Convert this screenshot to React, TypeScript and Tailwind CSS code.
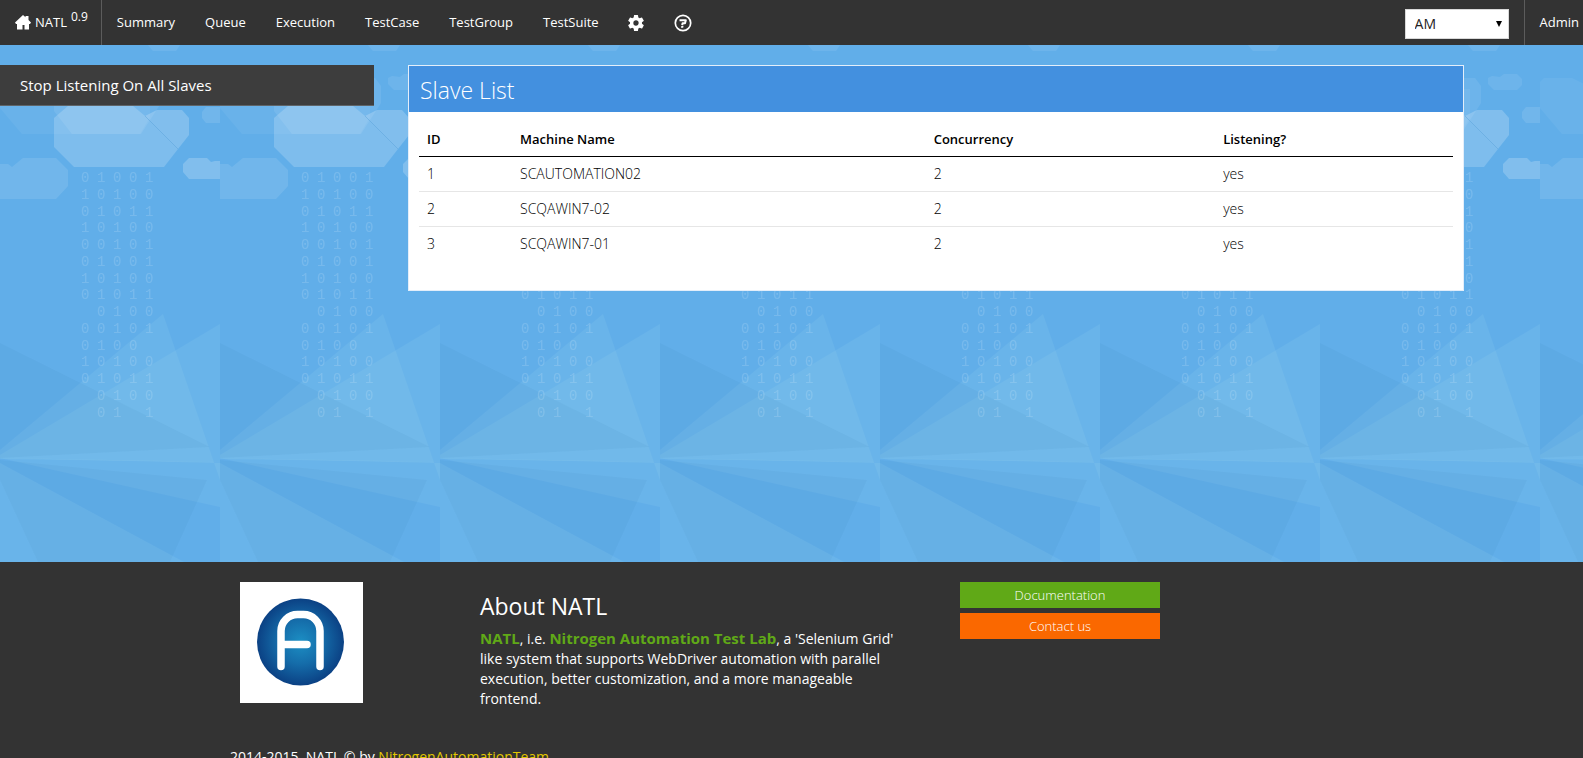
import React from "react";

const bits = [
  "01001", "10100", "01011", "10100", "00101", "01001", "10100", "01011",
  " 0100", "00101", "0100 ", "10100", "01011", " 0100", " 01 1",
];

const bitColumns = [81, 97, 113, 129, 145];

const clouds: { points: string; opacity: number }[] = [
  { points: "148,0 180,0 176,6 153,6", opacity: 0.08 },
  { points: "0,37 4,33 32,33 54,44 150,44 150,72 140,89 22,89 0,63", opacity: 0.05 },
  { points: "54,42 64,33 155,33 161,41 161,58 141,89 72,89 54,66", opacity: 0.08 },
  { points: "168,33 172,31 180,32 184,29 197,29 202,34 202,40 197,45 174,45 168,39", opacity: 0.08 },
  { points: "54,73 68,61 133,61 145,71 178,104 164,122 74,122 54,102", opacity: 0.18 },
  { points: "145,71 157,65 182,65 189,73 189,90 178,104", opacity: 0.2 },
  { points: "202,67 206,62 220,62 220,78 206,78 202,73", opacity: 0.1 },
  { points: "183,119 189,113 207,113 211,117 215,116 220,116 220,134 189,134 183,127", opacity: 0.2 },
  { points: "0,119 8,119 12,122 23,113 56,113 68,125 68,141 56,154 0,154", opacity: 0.1 },
];

const facets: { points: string; fill: string; opacity: number }[] = [
  { points: "163,269 0,405 0,413 220,418 220,435", fill: "#dcfff2", opacity: 0.07 },
  { points: "220,279 0,410 0,414 220,417", fill: "#dcfff2", opacity: 0.07 },
  { points: "0,298 210,402 0,413", fill: "#1f5f9e", opacity: 0.06 },
  { points: "0,413 220,417 220,462", fill: "#dcfff2", opacity: 0.07 },
  { points: "0,415 207,435 170,517 38,517 0,435", fill: "#1f5f9e", opacity: 0.06 },
  { points: "0,418 184,517 0,517", fill: "#dcfff2", opacity: 0.07 },
];

function Backdrop() {
  return (
    <svg className="absolute inset-0 h-full w-full" aria-hidden="true">
      <defs>
        <pattern id="scene" width="220" height="517" patternUnits="userSpaceOnUse">
          {clouds.map((c) => (
            <polygon key={c.points} points={c.points} fill="#fff" fillOpacity={c.opacity} />
          ))}
          <path d="M145 71 178 104" stroke="#5ba3dc" strokeOpacity="0.5" />
          {facets.map((f) => (
            <polygon key={f.points} points={f.points} fill={f.fill} fillOpacity={f.opacity} />
          ))}
          <g fill="#fff" fillOpacity="0.14" fontFamily="Liberation Mono, monospace" fontSize="14">
            {bits.map((row, r) =>
              row.split("").map((bit, c) =>
                bit === " " ? null : (
                  <text key={`${r}-${c}`} x={bitColumns[c]} y={Math.round(137 + r * 16.76)}>
                    {bit}
                  </text>
                ),
              ),
            )}
          </g>
        </pattern>
      </defs>
      <rect width="100%" height="100%" fill="url(#scene)" />
    </svg>
  );
}

function HomeIcon() {
  return (
    <svg viewBox="0 0 16 15" className="h-[15px] w-4" fill="currentColor" aria-hidden="true">
      <path d="M8 0 10.500 2.200V1h3v4L16 7.600 15 9h-1v5.500H9.500V10h-2v4.500H2V9H1L0 7.600Z" />
    </svg>
  );
}

function GearIcon() {
  return (
    <svg viewBox="0 0 24 24" className="size-5" fill="currentColor" aria-hidden="true">
      <path d="M19.140 12.940c.04-.3.060-.61.060-.94s-.02-.64-.07-.94l2.030-1.580a.49.49 0 0 0 .12-.61l-1.920-3.320a.488.488 0 0 0-.59-.22l-2.390.96c-.5-.38-1.030-.7-1.620-.94l-.36-2.540a.484.484 0 0 0-.48-.41h-3.840c-.24 0-.43.17-.47.41l-.36 2.540c-.59.24-1.130.57-1.620.94l-2.390-.96c-.22-.08-.47 0-.59.22L2.740 8.870c-.12.21-.08.47.12.61l2.030 1.580c-.05.3-.09.63-.09.94s.02.64.07.94l-2.030 1.580a.49.49 0 0 0-.12.61l1.920 3.320c.12.22.37.29.59.22l2.390-.96c.5.38 1.030.7 1.620.94l.36 2.540c.05.24.24.41.48.41h3.840c.24 0 .44-.17.47-.41l.36-2.540c.59-.24 1.130-.56 1.620-.94l2.390.96c.22.080.47 0 .59-.22l1.920-3.320c.12-.22.070-.47-.12-.61l-2.010-1.580zM12 15.200A3.200 3.200 0 0 1 8.800 12c0-1.800 1.400-3.200 3.200-3.200s3.200 1.400 3.200 3.200-1.400 3.200-3.200 3.200z" />
    </svg>
  );
}

function HelpIcon() {
  return (
    <svg viewBox="0 0 18 18" className="size-[18px]" fill="none" stroke="currentColor" aria-hidden="true">
      <circle cx="9" cy="9" r="7.700" strokeWidth="1.700" />
      <path d="M5.500 6.200h6.300l-.8 3H8.600l-.4 2" strokeWidth="2" strokeLinejoin="round" />
      <path d="M7.300 12h2.200l-.3 1.800H7Z" fill="currentColor" stroke="none" />
    </svg>
  );
}

function Logo() {
  return (
    <svg viewBox="0 0 123 121" className="h-[121px] w-[123px] bg-white" role="img" aria-label="NATL logo">
      <defs>
        <radialGradient id="disc">
          <stop offset="0" stopColor="#1c8fc4" />
          <stop offset="0.5" stopColor="#156daa" />
          <stop offset="1" stopColor="#0b4184" />
        </radialGradient>
      </defs>
      <circle cx="60.500" cy="60" r="43.500" fill="url(#disc)" />
      <path
        d="M41 84.500V49a16.500 16.500 0 0 1 16.500-16.500h6A16.500 16.500 0 0 1 80 49v35.500M41 62.500h26"
        fill="none"
        stroke="#fff"
        strokeWidth="7.500"
        strokeLinecap="round"
      />
    </svg>
  );
}

const links = ["Summary", "Queue", "Execution", "TestCase", "TestGroup", "TestSuite"];

const slaves = [
  { id: 1, name: "SCAUTOMATION02", concurrency: 2, listening: "yes" },
  { id: 2, name: "SCQAWIN7-02", concurrency: 2, listening: "yes" },
  { id: 3, name: "SCQAWIN7-01", concurrency: 2, listening: "yes" },
];

export default function App() {
  return (
    <div className="h-screen overflow-hidden bg-[#333333] font-['Open_Sans','Noto_Sans',sans-serif] text-sm text-white">
      <nav className="flex h-[45px] items-stretch bg-[#333333] text-[13px]">
        <a href="#home" className="flex items-center border-r border-[#5c5c5c] pr-[13px] pl-[15px]">
          <HomeIcon />
          <span className="ml-1">NATL</span>
          <sup className="ml-1 text-[12px]">0.9</sup>
        </a>
        {links.map((label) => (
          <a key={label} href={`#${label}`} className="flex items-center px-[15px]">
            {label}
          </a>
        ))}
        <a href="#settings" aria-label="Settings" className="flex items-center px-3">
          <GearIcon />
        </a>
        <a href="#help" aria-label="Help" className="flex items-center px-4">
          <HelpIcon />
        </a>
        <div className="ml-auto flex items-center pt-[2px] pr-[15px]">
          <div className="relative">
            <select
              aria-label="Project"
              defaultValue="AM"
              className="h-[30px] w-[104px] appearance-none border border-[#d9d9d9] bg-white px-[9px] text-[14px] text-[#222222]"
            >
              <option>AM</option>
            </select>
            <svg viewBox="0 0 6 6" className="pointer-events-none absolute top-3 right-[7px] size-[6px]" aria-hidden="true">
              <path d="M0 0h6L3 6Z" fill="#000" />
            </svg>
          </div>
        </div>
        <a href="#admin" className="flex items-center border-l border-[#5c5c5c] pr-1 pl-[15px]">
          Admin
        </a>
      </nav>

      <main className="relative h-[517px] bg-[#61aee9]">
        <Backdrop />
        <div className="relative flex items-start gap-[34px] pt-5">
          <aside className="w-[374px] shrink-0">
            <button
              type="button"
              className="h-[41px] w-full border-b border-[#5f6468] bg-[#3d3d3d] px-5 pt-px text-left text-[15px]"
            >
              Stop Listening On All Slaves
            </button>
          </aside>
          <section className="mr-[119px] flex-1 border border-[#e3eefa] bg-white text-black">
            <h2 className="h-[46px] bg-[#4390df] px-[11px] text-[23px] leading-[48px] font-light text-white">Slave List</h2>
            <div className="px-[10px] pt-[10px] pb-[29px]">
              <table className="w-full table-fixed border-collapse text-left text-[14px] leading-5">
                <colgroup>
                  <col className="w-[9%]" />
                  <col className="w-[40%]" />
                  <col className="w-[28%]" />
                  <col className="w-[23%]" />
                </colgroup>
                <thead className="text-[13px]">
                  <tr className="border-b border-black">
                    <th className="px-2 py-[7px] font-semibold">ID</th>
                    <th className="px-2 font-semibold">Machine Name</th>
                    <th className="px-2 font-semibold">Concurrency</th>
                    <th className="px-2 font-semibold">Listening?</th>
                  </tr>
                </thead>
                <tbody className="font-light">
                  {slaves.map((s) => (
                    <tr key={s.id} className="border-b border-[#e6e6e6] last:border-b-0">
                      <td className="px-2 py-[7px]">{s.id}</td>
                      <td className="px-2">{s.name}</td>
                      <td className="px-2">{s.concurrency}</td>
                      <td className="px-2">{s.listening}</td>
                    </tr>
                  ))}
                </tbody>
              </table>
            </div>
          </section>
        </div>
      </main>

      <footer className="mx-auto max-w-[1123px]">
        <div className="flex items-start px-[10px] pt-5">
          <div className="w-[240px] shrink-0">
            <Logo />
          </div>
          <div className="w-[480px] shrink-0 pt-[10px] pr-[50px]">
            <h3 className="text-[23px] leading-7">About NATL</h3>
            <p className="mt-2 text-[14px] leading-5">
              <strong className="text-[15px] text-[#60a917]">NATL</strong>, i.e.{" "}
              <strong className="text-[15px] text-[#60a917]">Nitrogen Automation Test Lab</strong>, a 'Selenium Grid' like
              system that supports WebDriver automation with parallel execution, better customization, and a more
              manageable frontend.
            </p>
          </div>
          <div className="flex w-[200px] flex-col gap-[5px] text-center text-[13px] leading-[26px] font-light">
            <a href="#docs" className="bg-[#60a917]">Documentation</a>
            <a href="#contact" className="bg-[#fa6800]">Contact us</a>
          </div>
        </div>
        <p className="mt-[38px] text-[14px] leading-5">
          2014-2015, NATL © by <a href="#team" className="text-[#e3c800]">NitrogenAutomationTeam</a>
        </p>
      </footer>
    </div>
  );
}
